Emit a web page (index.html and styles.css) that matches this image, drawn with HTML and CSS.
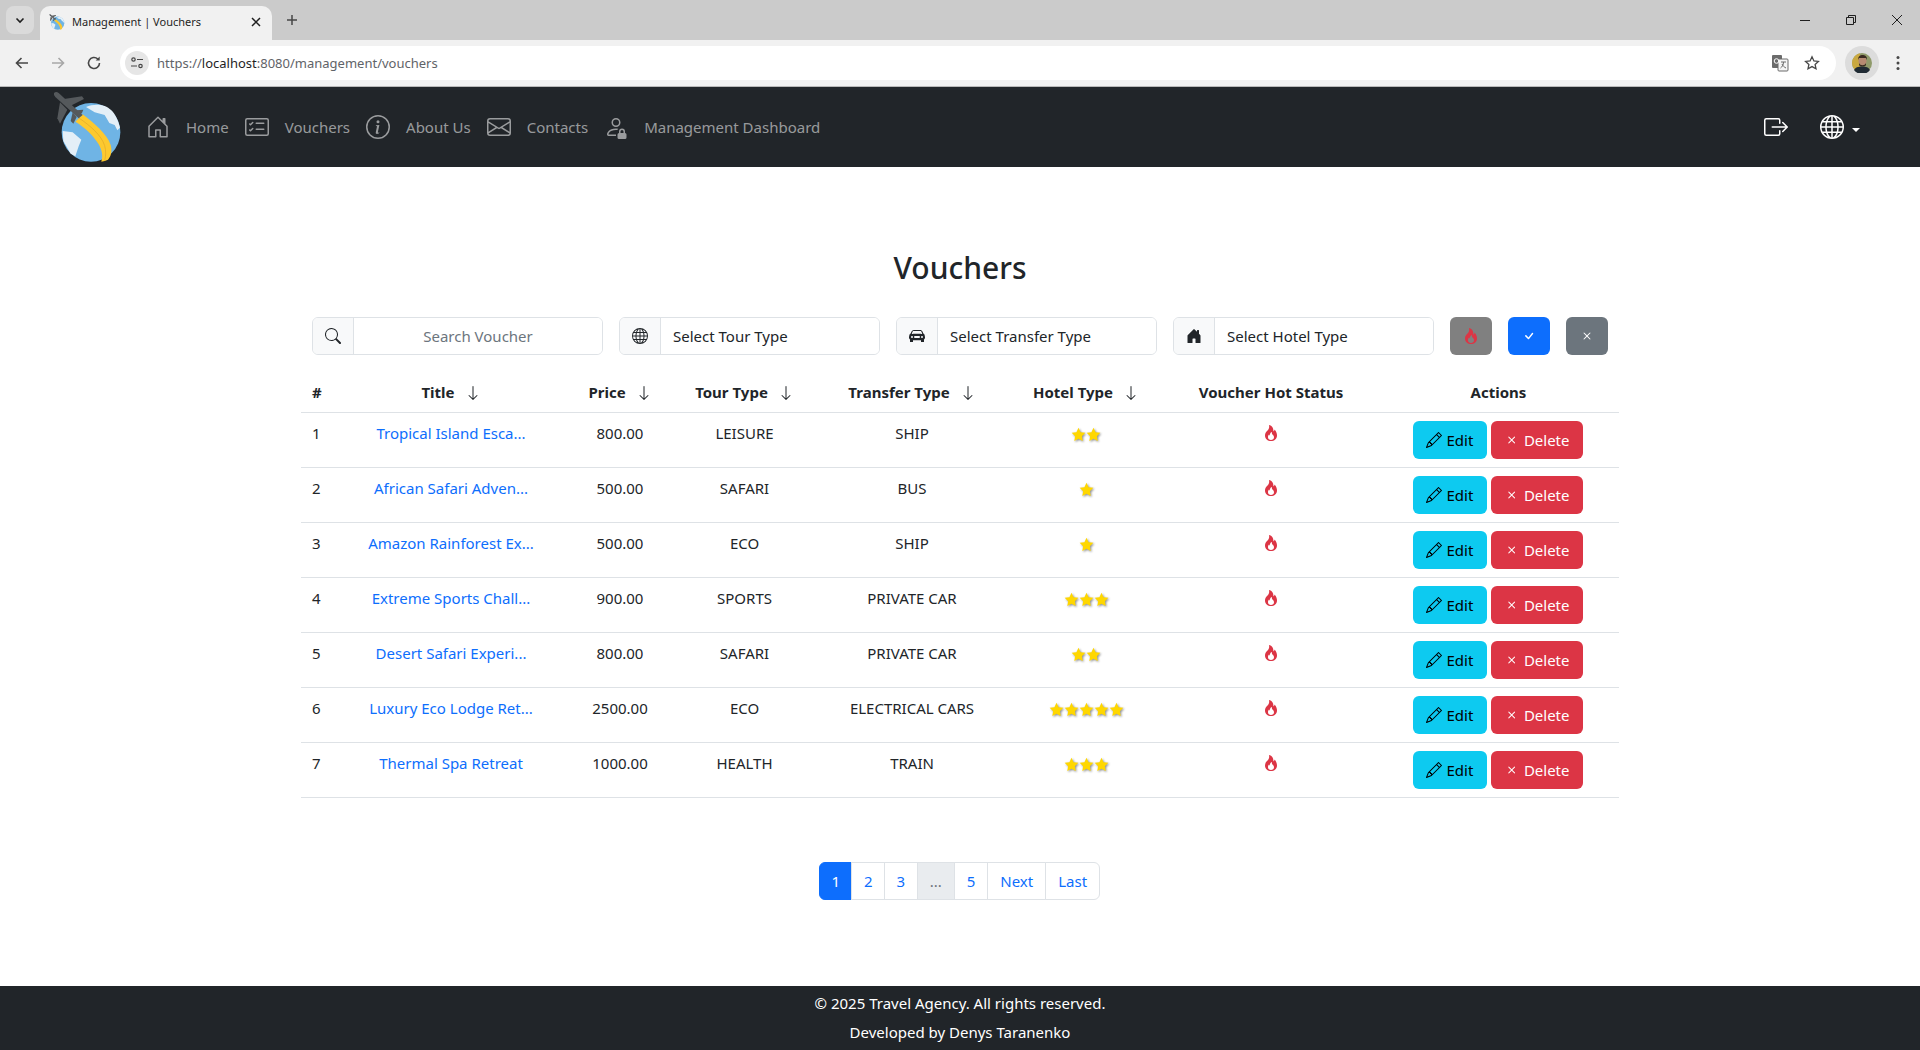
FILE: index.html
```html
<!DOCTYPE html>
<html lang="en">
<head>
<meta charset="utf-8">
<title>Management | Vouchers</title>
<link rel="stylesheet" href="styles.css">
</head>
<body>
<svg class="defs" width="0" height="0" aria-hidden="true">
  <symbol id="i-fire" viewBox="0 0 16 16"><path d="M8 16c3.314 0 6-2 6-5.5 0-1.5-.5-4-2.5-6 .25 1.5-1.25 2-1.25 2C11 4 9 .5 6 0c.357 2 .5 4-2 6-1.25 1-2 2.729-2 4.5C2 14 4.686 16 8 16m0-1c-1.657 0-3-1-3-2.75 0-.75.25-2 1.25-3C6.125 10 7 10.5 7 10.5c-.375-1.25.5-3.25 2-3.5-.179 1-.25 2 1 3 .625.5 1 1.364 1 2.25C11 14 9.657 15 8 15"/></symbol>
  <symbol id="i-pencil" viewBox="0 0 16 16"><path d="M12.146.146a.5.5 0 0 1 .708 0l3 3a.5.5 0 0 1 0 .708l-10 10a.5.5 0 0 1-.168.11l-5 2a.5.5 0 0 1-.65-.65l2-5a.5.5 0 0 1 .11-.168zM11.207 2.5 13.5 4.793 14.793 3.5 12.5 1.207zm1.586 3L10.5 3.207 4 9.707V10h.5a.5.5 0 0 1 .5.5v.5h.5a.5.5 0 0 1 .5.5v.5h.293zm-9.761 5.175-.106.106-1.528 3.821 3.821-1.528.106-.106A.5.5 0 0 1 5 12.5V12h-.5a.5.5 0 0 1-.5-.5V11h-.5a.5.5 0 0 1-.468-.325"/></symbol>
  <symbol id="i-x" viewBox="0 0 16 16"><path d="M4.646 4.646a.5.5 0 0 1 .708 0L8 7.293l2.646-2.647a.5.5 0 0 1 .708.708L8.707 8l2.647 2.646a.5.5 0 0 1-.708.708L8 8.707l-2.646 2.647a.5.5 0 0 1-.708-.708L7.293 8 4.646 5.354a.5.5 0 0 1 0-.708"/></symbol>
  <symbol id="i-check" viewBox="0 0 16 16"><path d="M10.97 4.97a.75.75 0 0 1 1.07 1.05l-3.992 4.99a.75.75 0 0 1-1.08.02L4.324 8.384a.75.75 0 1 1 1.06-1.06l2.094 2.093 3.473-4.425z"/></symbol>
  <symbol id="i-down" viewBox="0 0 16 16"><path d="M8 1a.5.5 0 0 1 .5.5v11.793l3.146-3.147a.5.5 0 0 1 .708.708l-4 4a.5.5 0 0 1-.708 0l-4-4a.5.5 0 0 1 .708-.708L7.5 13.293V1.5A.5.5 0 0 1 8 1"/></symbol>
  <symbol id="i-globe" viewBox="0 0 16 16"><path d="M0 8a8 8 0 1 1 16 0A8 8 0 0 1 0 8m7.5-6.923c-.67.204-1.335.82-1.887 1.855A8 8 0 0 0 5.145 4H7.5zM4.09 4a9.3 9.3 0 0 1 .64-1.539 7 7 0 0 1 .597-.933A7.03 7.03 0 0 0 2.255 4zm-.582 3.5c.03-.877.138-1.718.312-2.5H1.674a7 7 0 0 0-.656 2.5zM4.847 5a12.5 12.5 0 0 0-.338 2.5H7.5V5zM8.5 5v2.5h2.99a12.5 12.5 0 0 0-.337-2.5zM4.51 8.5a12.5 12.5 0 0 0 .337 2.5H7.5V8.5zm3.99 0V11h2.653c.187-.765.306-1.608.338-2.5zM5.145 12q.208.58.468 1.068c.552 1.035 1.218 1.65 1.887 1.855V12zm.182 2.472a7 7 0 0 1-.597-.933A9.3 9.3 0 0 1 4.09 12H2.255a7 7 0 0 0 3.072 2.472M3.82 11a13.7 13.7 0 0 1-.312-2.5h-2.49c.062.89.291 1.733.656 2.5zm6.853 3.472A7 7 0 0 0 13.745 12H11.91a9.3 9.3 0 0 1-.64 1.539 7 7 0 0 1-.597.933M8.5 12v2.923c.67-.204 1.335-.82 1.887-1.855q.26-.487.468-1.068zm3.68-1h2.146c.365-.767.594-1.61.656-2.5h-2.49a13.7 13.7 0 0 1-.312 2.5m2.802-3.5a7 7 0 0 0-.656-2.5H12.18c.174.782.282 1.623.312 2.5zM11.27 2.461c.247.464.462.98.64 1.539h1.835a7 7 0 0 0-3.072-2.472c.218.284.418.598.597.933M10.855 4a8 8 0 0 0-.468-1.068C9.835 1.897 9.17 1.282 8.5 1.077V4z"/></symbol>
  <symbol id="i-star" viewBox="0 0 16 16"><path d="M8 .8l2.2 4.7 5.1.7-3.7 3.6.9 5.1L8 12.5l-4.5 2.4.9-5.1L.7 6.2l5.1-.7z"/></symbol>
  <symbol id="i-logo" viewBox="30 6 228 240">
    <circle cx="153" cy="142" r="88" fill="#6fb4e5"/>
    <path d="M68 138l30 4 26 22-8 20-10 30-14-8-22-38z" fill="#e4eff7"/>
    <path d="M138 66c24-10 56-10 76 10 12 12 20 28 26 52l-8 8-8-16-16-6-14-24-30-8z" fill="#e4eff7"/>
    <path d="M176 92l22 8 8 20-14-4-8-12zM222 122l8 14-4 14-8-12z" fill="#6fb4e5"/>
    <path d="M106 110 128 88C160 112 202 148 212 180 217 198 213 214 204 224 198 227 191 229 184 230 190 212 186 196 176 178 160 150 132 126 106 110Z" fill="#fdc92f"/>
    <path d="M117 99C150 122 184 150 194 182 198 196 198 212 194 227" fill="none" stroke="#e6ad2a" stroke-width="2.5"/>
    <path d="M42 24Q48 18 56 24L128 90 116 100 46 36Q40 30 42 24Z" fill="#55595c"/>
    <path d="M72 42 126 34 132 42 92 62Z" fill="#55595c"/>
    <path d="M60 52 52 100 60 116 82 74Z" fill="#55595c"/>
    <path d="M98 82 92 108 100 116 110 96Z" fill="#55595c"/>
    <path d="M108 76 130 74 126 84 116 92Z" fill="#55595c"/>
  </symbol>
</svg>

<header class="browser">
  <div class="tabstrip">
    <span class="tabs-btn"><svg width="12" height="12" viewBox="0 0 12 12"><path d="M2.5 4.5 6 8l3.5-3.5" fill="none" stroke="#1f1f1f" stroke-width="1.6"/></svg></span>
    <div class="tab">
      <svg class="tab-fav" width="18" height="18"><use href="#i-logo"/></svg>
      <span class="tab-title">Management | Vouchers</span>
      <svg width="12" height="12" viewBox="0 0 12 12"><path d="M2 2l8 8M10 2l-8 8" stroke="#1f1f1f" stroke-width="1.5"/></svg>
    </div>
    <span class="new-tab"><svg width="12" height="12" viewBox="0 0 12 12"><path d="M6 1v10M1 6h10" stroke="#474747" stroke-width="1.5"/></svg></span>
    <div class="win-ctrl">
      <svg width="12" height="12" viewBox="0 0 12 12"><path d="M1 6.5h10" stroke="#1f1f1f"/></svg>
      <svg width="12" height="12" viewBox="0 0 12 12"><path d="M1.5 3.5h7v7h-7zM3.5 3.5v-2h7v7h-2" fill="none" stroke="#1f1f1f"/></svg>
      <svg width="12" height="12" viewBox="0 0 12 12"><path d="M1 1l10 10M11 1 1 11" stroke="#1f1f1f"/></svg>
    </div>
  </div>
  <div class="toolbar">
    <svg class="tb-ico" width="16" height="16" viewBox="0 0 16 16"><path d="M14 8H3M7.5 3 2.5 8l5 5" fill="none" stroke="#474747" stroke-width="1.6"/></svg>
    <svg class="tb-ico" width="16" height="16" viewBox="0 0 16 16"><path d="M2 8h11M8.5 3l5 5-5 5" fill="none" stroke="#a8a8a8" stroke-width="1.6"/></svg>
    <svg class="tb-ico tb-reload" width="16" height="16" viewBox="0 0 16 16"><path d="M13.5 8a5.5 5.5 0 1 1-1.7-4" fill="none" stroke="#474747" stroke-width="1.6"/><path d="M13.7 1.5v4h-4z" fill="#474747"/></svg>
    <div class="omnibox">
      <span class="site-ico"><svg width="16" height="16" viewBox="0 0 16 16"><circle cx="4.5" cy="4.5" r="1.7" fill="none" stroke="#474747" stroke-width="1.2"/><path d="M8 4.5h6M2 11h6" stroke="#474747" stroke-width="1.2"/><circle cx="11.5" cy="11" r="1.7" fill="none" stroke="#474747" stroke-width="1.2"/></svg></span>
      <span class="url">https://<b class="url-host">localhost</b>:8080/management/vouchers</span>
      <svg class="omni-translate" width="18" height="18" viewBox="0 0 18 18"><rect x="1" y="1" width="10" height="13" rx="1" fill="#6b6b6b"/><rect x="7" y="5" width="10" height="12" rx="1" fill="#f4f4f4" stroke="#6b6b6b"/><path d="M10 8h5M12.5 8c0 3-1.5 5-3 6M11 10c1 2 2 3 4 4" fill="none" stroke="#6b6b6b"/><circle cx="5.5" cy="7" r="2.3" fill="none" stroke="#fff"/></svg>
      <svg class="omni-star" width="16" height="16" viewBox="0 0 16 16"><path d="M8 1.8l1.9 4.1 4.5.5-3.3 3 .9 4.4L8 11.6l-4 2.2.9-4.4-3.3-3 4.500-.5z" fill="none" stroke="#474747" stroke-width="1.3"/></svg>
    </div>
    <span class="avatar-wrap"><svg width="20" height="20" viewBox="0 0 20 20"><circle cx="10" cy="10" r="10" fill="#8f9a6a"/><path d="M0 10a10 10 0 0 0 8 9.8V.2A10 10 0 0 0 0 10z" fill="#c9a840"/><circle cx="10.5" cy="8" r="4" fill="#b58a72"/><path d="M6 7c0-4 2.5-5 4.5-5s5 1 4.5 5l-1-2H7z" fill="#3a2a20"/><path d="M7 10c1 3 6 3 7 0v2c-1 2-6 2-7 0z" fill="#3a2a20"/><path d="M2 17c1-2.5 4-3.5 8-3.5s7 1 8 3.5a10 10 0 0 1-16 0z" fill="#1f2a33"/></svg></span>
    <svg class="tb-menu" width="4" height="16" viewBox="0 0 4 16"><circle cx="2" cy="2.5" r="1.5" fill="#474747"/><circle cx="2" cy="8" r="1.5" fill="#474747"/><circle cx="2" cy="13.5" r="1.5" fill="#474747"/></svg>
  </div>
</header>

<nav class="navbar">
  <svg class="logo" width="76" height="80"><use href="#i-logo"/></svg>
  <ul class="nav-links">
    <li><svg class="nav-ico" viewBox="0 0 16 16"><path d="M8.354 1.146a.5.5 0 0 0-.708 0l-6 6A.5.5 0 0 0 1.5 7.5v7a.5.5 0 0 0 .5.5h4.5a.5.5 0 0 0 .5-.5v-4h2v4a.5.5 0 0 0 .5.5H14a.5.5 0 0 0 .5-.5v-7a.5.5 0 0 0-.146-.354L13 5.793V2.5a.5.5 0 0 0-.5-.5h-1a.5.5 0 0 0-.5.5v1.293zM2.5 14V7.707l5.5-5.5 5.5 5.5V14H10v-4a.5.5 0 0 0-.5-.5h-3a.5.5 0 0 0-.5.5v4z"/></svg><a href="#">Home</a></li>
    <li><svg class="nav-ico" viewBox="0 0 16 16"><path d="M14.5 3a.5.5 0 0 1 .5.5v9a.5.5 0 0 1-.5.5h-13a.5.5 0 0 1-.5-.5v-9a.5.5 0 0 1 .5-.5zm-13-1A1.5 1.5 0 0 0 0 3.5v9A1.5 1.5 0 0 0 1.5 14h13a1.5 1.5 0 0 0 1.5-1.5v-9A1.5 1.5 0 0 0 14.5 2z"/><path d="M7 5.5a.5.5 0 0 1 .5-.5h5a.5.5 0 0 1 0 1h-5a.5.5 0 0 1-.5-.5m-1.496-.854a.5.5 0 0 1 0 .708l-1.5 1.5a.5.5 0 0 1-.708 0l-.5-.5a.5.5 0 1 1 .708-.708l.146.147 1.146-1.147a.5.5 0 0 1 .708 0M7 9.5a.5.5 0 0 1 .5-.5h5a.5.5 0 0 1 0 1h-5a.5.5 0 0 1-.5-.5m-1.496-.854a.5.5 0 0 1 0 .708l-1.5 1.5a.5.5 0 0 1-.708 0l-.5-.5a.5.5 0 0 1 .708-.708l.146.147 1.146-1.147a.5.5 0 0 1 .708 0"/></svg><a href="#">Vouchers</a></li>
    <li><svg class="nav-ico" viewBox="0 0 16 16"><path d="M8 15A7 7 0 1 1 8 1a7 7 0 0 1 0 14m0 1A8 8 0 1 0 8 0a8 8 0 0 0 0 16"/><path d="m8.93 6.588-2.29.287-.082.38.45.083c.294.07.352.176.288.469l-.738 3.468c-.194.897.105 1.319.808 1.319.545 0 1.178-.252 1.465-.598l.088-.416c-.2.176-.492.246-.686.246-.275 0-.375-.193-.304-.533zM9 4.5a1 1 0 1 1-2 0 1 1 0 0 1 2 0"/></svg><a href="#">About Us</a></li>
    <li><svg class="nav-ico" viewBox="0 0 16 16"><path d="M0 4a2 2 0 0 1 2-2h12a2 2 0 0 1 2 2v8a2 2 0 0 1-2 2H2a2 2 0 0 1-2-2zm2-1a1 1 0 0 0-1 1v.217l7 4.2 7-4.2V4a1 1 0 0 0-1-1zm13 2.383-4.708 2.825L15 11.105zm-.034 6.876-5.64-3.471L8 9.583l-1.326-.795-5.64 3.47A1 1 0 0 0 2 13h12a1 1 0 0 0 .966-.741M1 11.105l4.708-2.897L1 5.383z"/></svg><a href="#">Contacts</a></li>
    <li><svg class="nav-ico" viewBox="0 0 16 16"><path d="M11 5a3 3 0 1 1-6 0 3 3 0 0 1 6 0M8 7a2 2 0 1 0 0-4 2 2 0 0 0 0 4m0 5.996V14H3s-1 0-1-1 1-4 6-4q.845.002 1.544.107a4.5 4.5 0 0 0-.803.918A11 11 0 0 0 8 10c-2.29 0-3.516.68-4.168 1.332-.678.678-.83 1.418-.832 1.664zM9 13a1 1 0 0 1 1-1v-1a2 2 0 1 1 4 0v1a1 1 0 0 1 1 1v2a1 1 0 0 1-1 1h-4a1 1 0 0 1-1-1zm3-3a1 1 0 0 0-1 1v1h2v-1a1 1 0 0 0-1-1"/></svg><a href="#">Management Dashboard</a></li>
  </ul>
  <div class="nav-right">
    <svg class="nav-ico nav-ico-white" viewBox="0 0 16 16"><path d="M10 12.5a.5.5 0 0 1-.5.5h-8a.5.5 0 0 1-.5-.5v-9a.5.5 0 0 1 .5-.5h8a.5.5 0 0 1 .5.5v2a.5.5 0 0 0 1 0v-2A1.5 1.5 0 0 0 9.5 2h-8A1.5 1.5 0 0 0 0 3.5v9A1.5 1.5 0 0 0 1.5 14h8a1.5 1.5 0 0 0 1.5-1.5v-2a.5.5 0 0 0-1 0z"/><path d="M15.854 8.354a.5.5 0 0 0 0-.708l-3-3a.5.5 0 0 0-.708.708L14.293 7.5H5.5a.5.5 0 0 0 0 1h8.793l-2.147 2.146a.5.5 0 0 0 .708.708z"/></svg>
    <span class="lang"><svg class="nav-ico nav-ico-white"><use href="#i-globe"/></svg><span class="caret"></span></span>
  </div>
</nav>

<main class="content">
  <h2 class="page-title">Vouchers</h2>
  <form class="filters">
    <div class="group group-search">
      <span class="group-ico"><svg width="16" height="16" viewBox="0 0 16 16"><path d="M11.742 10.344a6.5 6.5 0 1 0-1.397 1.398h-.001q.044.06.098.115l3.85 3.85a1 1 0 0 0 1.415-1.414l-3.85-3.85a1 1 0 0 0-.115-.1zM12 6.5a5.5 5.5 0 1 1-11 0 5.5 5.5 0 0 1 11 0"/></svg></span>
      <input class="field field-center" type="text" placeholder="Search Voucher">
    </div>
    <div class="group">
      <span class="group-ico"><svg width="16" height="16"><use href="#i-globe"/></svg></span>
      <select class="field"><option>Select Tour Type</option></select>
    </div>
    <div class="group">
      <span class="group-ico"><svg width="16" height="16" viewBox="0 0 16 16"><path d="M2.52 3.515A2.5 2.5 0 0 1 4.82 2h6.362c1 0 1.904.596 2.298 1.515l.792 1.848c.075.175.21.319.38.404.5.25.855.715.965 1.262l.335 1.679q.05.242.049.49v.413c0 .814-.39 1.543-1 1.997V13.5a.5.5 0 0 1-.5.5h-2a.5.5 0 0 1-.5-.5v-1.338c-1.292.048-2.745.088-4 .088s-2.708-.04-4-.088V13.5a.5.5 0 0 1-.5.5h-2a.5.5 0 0 1-.5-.5v-1.892c-.61-.454-1-1.183-1-1.997v-.413a2.5 2.5 0 0 1 .049-.49l.335-1.68c.11-.546.465-1.012.964-1.261a.8.8 0 0 0 .381-.404l.792-1.848ZM3 10a1 1 0 1 0 0-2 1 1 0 0 0 0 2m10 0a1 1 0 1 0 0-2 1 1 0 0 0 0 2M6 8a1 1 0 0 0 0 2h4a1 1 0 1 0 0-2zM2.906 5.189a.51.51 0 0 0 .497.731c.91-.073 3.35-.17 4.597-.17s3.688.097 4.597.17a.51.51 0 0 0 .497-.731l-.956-1.913A.5.5 0 0 0 11.691 3H4.309a.5.5 0 0 0-.447.276L2.906 5.19Z"/></svg></span>
      <select class="field"><option>Select Transfer Type</option></select>
    </div>
    <div class="group">
      <span class="group-ico"><svg width="16" height="16" viewBox="0 0 16 16"><path d="M6.5 14.5v-3.505c0-.245.25-.495.5-.495h2c.25 0 .5.25.5.5v3.5a.5.5 0 0 0 .5.5h4a.5.5 0 0 0 .5-.5v-7a.5.5 0 0 0-.146-.354L13 5.793V2.5a.5.5 0 0 0-.5-.5h-1a.5.5 0 0 0-.5.5v1.293L8.354 1.146a.5.5 0 0 0-.708 0l-6 6A.5.5 0 0 0 1.5 7.5v7a.5.5 0 0 0 .5.5h4a.5.5 0 0 0 .5-.5"/></svg></span>
      <select class="field"><option>Select Hotel Type</option></select>
    </div>
    <button class="square square-hot" type="button"><svg class="ico-fire" width="16" height="16"><use href="#i-fire"/></svg></button>
    <button class="square square-ok" type="button"><svg width="16" height="16"><use href="#i-check"/></svg></button>
    <button class="square square-clear" type="button"><svg width="16" height="16"><use href="#i-x"/></svg></button>
  </form>

  <table class="vouchers">
    <thead>
      <tr>
        <th class="c-num">#</th>
        <th>Title<svg class="sort"><use href="#i-down"/></svg></th>
        <th>Price<svg class="sort"><use href="#i-down"/></svg></th>
        <th>Tour Type<svg class="sort"><use href="#i-down"/></svg></th>
        <th>Transfer Type<svg class="sort"><use href="#i-down"/></svg></th>
        <th>Hotel Type<svg class="sort"><use href="#i-down"/></svg></th>
        <th>Voucher Hot Status</th>
        <th>Actions</th>
      </tr>
    </thead>
    <tbody>
      <tr>
        <td class="c-num">1</td><td><a href="#">Tropical Island Esca...</a></td><td>800.00</td><td>LEISURE</td><td>SHIP</td>
        <td><svg class="star"><use href="#i-star"/></svg><svg class="star"><use href="#i-star"/></svg></td>
        <td><svg class="ico-fire hot"><use href="#i-fire"/></svg></td>
        <td class="c-act"><a class="btn btn-edit" href="#"><svg width="16" height="16"><use href="#i-pencil"/></svg>Edit</a><a class="btn btn-del" href="#"><svg width="16" height="16"><use href="#i-x"/></svg>Delete</a></td>
      </tr>
      <tr>
        <td class="c-num">2</td><td><a href="#">African Safari Adven...</a></td><td>500.00</td><td>SAFARI</td><td>BUS</td>
        <td><svg class="star"><use href="#i-star"/></svg></td>
        <td><svg class="ico-fire hot"><use href="#i-fire"/></svg></td>
        <td class="c-act"><a class="btn btn-edit" href="#"><svg width="16" height="16"><use href="#i-pencil"/></svg>Edit</a><a class="btn btn-del" href="#"><svg width="16" height="16"><use href="#i-x"/></svg>Delete</a></td>
      </tr>
      <tr>
        <td class="c-num">3</td><td><a href="#">Amazon Rainforest Ex...</a></td><td>500.00</td><td>ECO</td><td>SHIP</td>
        <td><svg class="star"><use href="#i-star"/></svg></td>
        <td><svg class="ico-fire hot"><use href="#i-fire"/></svg></td>
        <td class="c-act"><a class="btn btn-edit" href="#"><svg width="16" height="16"><use href="#i-pencil"/></svg>Edit</a><a class="btn btn-del" href="#"><svg width="16" height="16"><use href="#i-x"/></svg>Delete</a></td>
      </tr>
      <tr>
        <td class="c-num">4</td><td><a href="#">Extreme Sports Chall...</a></td><td>900.00</td><td>SPORTS</td><td>PRIVATE CAR</td>
        <td><svg class="star"><use href="#i-star"/></svg><svg class="star"><use href="#i-star"/></svg><svg class="star"><use href="#i-star"/></svg></td>
        <td><svg class="ico-fire hot"><use href="#i-fire"/></svg></td>
        <td class="c-act"><a class="btn btn-edit" href="#"><svg width="16" height="16"><use href="#i-pencil"/></svg>Edit</a><a class="btn btn-del" href="#"><svg width="16" height="16"><use href="#i-x"/></svg>Delete</a></td>
      </tr>
      <tr>
        <td class="c-num">5</td><td><a href="#">Desert Safari Experi...</a></td><td>800.00</td><td>SAFARI</td><td>PRIVATE CAR</td>
        <td><svg class="star"><use href="#i-star"/></svg><svg class="star"><use href="#i-star"/></svg></td>
        <td><svg class="ico-fire hot"><use href="#i-fire"/></svg></td>
        <td class="c-act"><a class="btn btn-edit" href="#"><svg width="16" height="16"><use href="#i-pencil"/></svg>Edit</a><a class="btn btn-del" href="#"><svg width="16" height="16"><use href="#i-x"/></svg>Delete</a></td>
      </tr>
      <tr>
        <td class="c-num">6</td><td><a href="#">Luxury Eco Lodge Ret...</a></td><td>2500.00</td><td>ECO</td><td>ELECTRICAL CARS</td>
        <td><svg class="star"><use href="#i-star"/></svg><svg class="star"><use href="#i-star"/></svg><svg class="star"><use href="#i-star"/></svg><svg class="star"><use href="#i-star"/></svg><svg class="star"><use href="#i-star"/></svg></td>
        <td><svg class="ico-fire hot"><use href="#i-fire"/></svg></td>
        <td class="c-act"><a class="btn btn-edit" href="#"><svg width="16" height="16"><use href="#i-pencil"/></svg>Edit</a><a class="btn btn-del" href="#"><svg width="16" height="16"><use href="#i-x"/></svg>Delete</a></td>
      </tr>
      <tr>
        <td class="c-num">7</td><td><a href="#">Thermal Spa Retreat</a></td><td>1000.00</td><td>HEALTH</td><td>TRAIN</td>
        <td><svg class="star"><use href="#i-star"/></svg><svg class="star"><use href="#i-star"/></svg><svg class="star"><use href="#i-star"/></svg></td>
        <td><svg class="ico-fire hot"><use href="#i-fire"/></svg></td>
        <td class="c-act"><a class="btn btn-edit" href="#"><svg width="16" height="16"><use href="#i-pencil"/></svg>Edit</a><a class="btn btn-del" href="#"><svg width="16" height="16"><use href="#i-x"/></svg>Delete</a></td>
      </tr>
    </tbody>
  </table>

  <ul class="pagination">
    <li class="page page-num page-active"><a href="#">1</a></li>
    <li class="page page-num"><a href="#">2</a></li>
    <li class="page page-num"><a href="#">3</a></li>
    <li class="page page-gap"><span>...</span></li>
    <li class="page"><a href="#">5</a></li>
    <li class="page"><a href="#">Next</a></li>
    <li class="page"><a href="#">Last</a></li>
  </ul>
</main>

<footer class="footer">
  <p>© 2025 Travel Agency. All rights reserved.</p>
  <p>Developed by Denys Taranenko</p>
</footer>
</body>
</html>
```

FILE: styles.css
```css
* { box-sizing: border-box; }
html, body { height: 100%; }
body {
  margin: 0;
  min-height: 1050px;
  display: flex;
  flex-direction: column;
  font-family: "Noto Sans", "Open Sans", sans-serif;
  font-size: 15px;
  line-height: 24px;
  color: #212529;
  background: #fff;
  overflow: hidden;
}
a { text-decoration: none; }
.defs { position: absolute; }

/* browser chrome */
.browser { flex: none; }
.tabstrip {
  height: 40px;
  background: #cbcbcb;
  display: flex;
  align-items: flex-end;
  padding-left: 6px;
}
.tabs-btn {
  width: 28px; height: 28px;
  margin-bottom: 6px;
  border-radius: 8px;
  background: #dadada;
  display: flex; align-items: center; justify-content: center;
}
.tab {
  width: 232px; height: 34px;
  margin-left: 6px;
  padding: 0 10px 2px 8px;
  background: #f1f1f1;
  border-radius: 10px 10px 0 0;
  display: flex; align-items: center;
}
.tab-fav { flex: none; margin-right: 6px; }
.tab-title { flex: 1; font-size: 11px; color: #1f1f1f; white-space: nowrap; }
.new-tab {
  width: 28px; height: 28px;
  margin: 0 0 6px 6px;
  display: flex; align-items: center; justify-content: center;
}
.win-ctrl {
  margin-left: auto;
  height: 40px;
  display: flex; align-items: center;
  gap: 34px;
  padding-right: 17px;
}
.toolbar {
  height: 47px;
  background: #f1f1f1;
  border-bottom: 1px solid #b9b9b9;
  display: flex; align-items: center;
  padding: 0 0 0 14px;
}
.tb-ico { flex: none; margin-right: 20px; }
.tb-reload { margin-right: 18px; }
.omnibox {
  width: 1716px; height: 34px;
  background: #fff;
  border-radius: 17px;
  display: flex; align-items: center;
  padding: 0 16px 0 5px;
}
.site-ico {
  width: 24px; height: 24px;
  border-radius: 50%;
  background: #e6e6e6;
  display: flex; align-items: center; justify-content: center;
  margin-right: 8px;
}
.url { flex: 1; font-size: 13px; color: #5f6368; }
.url-host { font-weight: 400; color: #1f1f1f; }
.omni-translate { margin-right: 15px; }
.avatar-wrap {
  width: 34px; height: 34px;
  margin-left: 9px;
  border-radius: 50%;
  background: #dcdcdc;
  display: flex; align-items: center; justify-content: center;
}
.tb-menu { margin-left: 17px; }

/* navbar */
.navbar {
  flex: none;
  height: 80px;
  background: #212529;
  display: flex; align-items: center;
  padding: 0 60px 0 50px;
}
.logo { flex: none; }
.nav-links {
  list-style: none;
  margin: 0 0 0 20px;
  padding: 0;
  display: flex; gap: 16px;
}
.nav-links li { display: flex; align-items: center; gap: 16px; }
.nav-links a { color: rgba(255,255,255,.55); }
.nav-ico { width: 24px; height: 24px; fill: rgba(255,255,255,.55); flex: none; }
.nav-ico-white { fill: #fff; }
.nav-right { margin-left: auto; display: flex; align-items: center; gap: 32px; }
.lang { display: flex; align-items: center; gap: 8px; }
.caret {
  width: 0; height: 0;
  margin-top: 6px;
  border-top: 4px solid #fff;
  border-left: 4px solid transparent;
  border-right: 4px solid transparent;
}

/* main */
.content {
  flex: 1;
  width: 1318px;
  margin: 0 auto;
  padding-top: 82px;
}
.page-title {
  margin: 0 0 30px;
  font-size: 30px;
  line-height: 38px;
  font-weight: 500;
  text-align: center;
}
.filters {
  display: flex; gap: 16px;
  margin: 0 11px 17px;
}
.group {
  width: 261px; height: 38px;
  display: flex;
  border: 1px solid #dee2e6;
  border-radius: 6px;
  overflow: hidden;
}
.group-search { width: 291px; }
.group-ico {
  flex: none;
  width: 41px;
  background: #f8f9fa;
  border-right: 1px solid #dee2e6;
  display: flex; align-items: center; justify-content: center;
  color: #212529;
  fill: #212529;
}
.field {
  flex: 1; min-width: 0;
  border: 0; outline: 0;
  background: #fff;
  font: inherit;
  color: #212529;
  padding: 0 12px;
  appearance: none;
}
.field-center { text-align: center; }
.field::placeholder { color: #6c757d; opacity: 1; }
.square {
  flex: none;
  width: 42px; height: 38px;
  padding: 0;
  border: 0;
  border-radius: 6px;
  display: flex; align-items: center; justify-content: center;
  fill: #fff;
}
.square-hot { background: #808080; }
.square-ok { background: #0d6efd; }
.square-clear { background: #6c757d; }
.ico-fire { fill: #dc3545; }

/* table */
.vouchers {
  width: 100%;
  table-layout: fixed;
  border-collapse: collapse;
}
.vouchers th, .vouchers td {
  padding: 8px;
  text-align: center;
  vertical-align: top;
  border-bottom: 1px solid #dee2e6;
}
.vouchers th { font-weight: 700; white-space: nowrap; }
.vouchers th:nth-child(1) { width: 34px; }
.vouchers th:nth-child(2) { width: 232px; }
.vouchers th:nth-child(3) { width: 106px; }
.vouchers th:nth-child(4) { width: 143px; }
.vouchers th:nth-child(5) { width: 192px; }
.vouchers th:nth-child(6) { width: 156px; }
.vouchers th:nth-child(7) { width: 214px; }
.vouchers .c-num { text-align: left; padding-left: 11px; padding-right: 0; }
.vouchers a { color: #0d6efd; }
.sort { width: 16px; height: 16px; margin-left: 10px; vertical-align: -3px; fill: #212529; }
.star {
  width: 15px; height: 15px;
  fill: #ffd700;
  vertical-align: -3px;
  filter: drop-shadow(1px 1px 1px rgba(0,0,0,.45));
}
.hot { width: 16px; height: 16px; vertical-align: -2px; }
.vouchers .c-act { white-space: nowrap; font-size: 0; padding: 8px 2px 8px 0; }
.vouchers .btn {
  display: inline-flex; align-items: center;
  height: 38px;
  padding: 0 13px;
  border-radius: 6px;
  font-size: 15px;
  vertical-align: top;
}
.vouchers .btn-edit { width: 74px; background: #0dcaf0; color: #000; fill: #000; gap: 5px; }
.vouchers .btn-del { width: 92px; margin-left: 4px; background: #dc3545; color: #fff; fill: #fff; gap: 5px; }

/* pagination */
.pagination {
  list-style: none;
  margin: 64px 0 0;
  padding: 0;
  display: flex;
  justify-content: center;
}
.page { margin-left: -1px; }
.page a, .page span {
  display: block;
  height: 38px;
  padding: 6px 12px;
  border: 1px solid #dee2e6;
  color: #0d6efd;
  background: #fff;
}
.page-num a { padding: 6px 11.5px; }
.page:first-child a { border-radius: 6px 0 0 6px; }
.page:last-child a { border-radius: 0 6px 6px 0; }
.page-active a { background: #0d6efd; border-color: #0d6efd; color: #fff; }
.page-gap span { background: #e9ecef; color: #6c757d; }

/* footer */
.footer {
  flex: none;
  height: 64px;
  padding-top: 5px;
  background: #212529;
  color: #fff;
  text-align: center;
}
.footer p { margin: 0 0 5px; }
```
